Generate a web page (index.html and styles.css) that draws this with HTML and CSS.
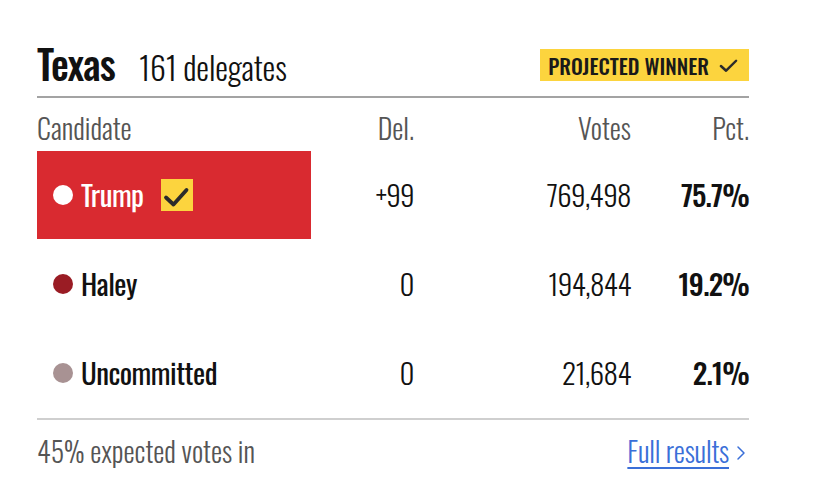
FILE: index.html
```html
<!DOCTYPE html>
<html lang="en">
<head>
<meta charset="utf-8">
<title>Texas results</title>
<link rel="stylesheet" href="styles.css">
</head>
<body>
<section class="card">
  <header class="card-head">
    <h2 class="state"><span class="state-name">Texas</span><span class="state-dels">161 delegates</span></h2>
    <div class="badge">PROJECTED WINNER
      <svg class="badge-check" viewBox="0 0 20 20" width="19" height="19"><path d="M2 10.5 L7.5 15.5 L18 5" fill="none" stroke="#2b2b2b" stroke-width="2.6" stroke-linecap="round" stroke-linejoin="round"/></svg>
    </div>
  </header>
  <div class="table">
    <div class="row head">
      <div class="cell cand">Candidate</div>
      <div class="cell num">Del.</div>
      <div class="cell num">Votes</div>
      <div class="cell num">Pct.</div>
    </div>
    <div class="row">
      <div class="cell cand winner"><span class="dot dot-white"></span><span class="name">Trump</span>
        <span class="win-box"><svg viewBox="0 0 32 32" width="32" height="32"><path d="M5 18.5 L12.5 25.5 L25.5 11" fill="none" stroke="#2b2b2b" stroke-width="3.8" stroke-linecap="round" stroke-linejoin="round"/></svg></span>
      </div>
      <div class="cell num val">+99</div>
      <div class="cell num val">769,498</div>
      <div class="cell num pct">75.7%</div>
    </div>
    <div class="row">
      <div class="cell cand"><span class="dot dot-haley"></span><span class="name">Haley</span></div>
      <div class="cell num val">0</div>
      <div class="cell num val">194,844</div>
      <div class="cell num pct">19.2%</div>
    </div>
    <div class="row">
      <div class="cell cand"><span class="dot dot-unc"></span><span class="name">Uncommitted</span></div>
      <div class="cell num val">0</div>
      <div class="cell num val">21,684</div>
      <div class="cell num pct">2.1%</div>
    </div>
  </div>
  <footer class="card-foot">
    <span class="expected">45% expected votes in</span>
    <a class="full" href="#">Full results</a>
    <svg class="chev" viewBox="0 0 10 16" width="10" height="16"><path d="M2 2 L8 8 L2 14" fill="none" stroke="#3a6fd8" stroke-width="1.5" stroke-linecap="round" stroke-linejoin="round"/></svg>
  </footer>
</section>
</body>
</html>
```
FILE: styles.css
```css
html, body { margin: 0; padding: 0; background: #fff; }
body { font-family: Oswald, "Roboto Condensed", "Liberation Sans", sans-serif; color: #111; }

.card { width: 712px; margin-left: 37px; padding-top: 38px; }

.card-head {
  display: flex;
  justify-content: space-between;
  align-items: flex-end;
  height: 58px;
  border-bottom: 2px solid #a3a3a3;
}
.state {
  margin: 0 0 7px 0; display: flex; align-items: baseline; gap: 24px;
  font-weight: normal; line-height: 1.3;
}
.state-name { font-size: 40px; font-weight: 500; letter-spacing: -0.9px; color: #111; }
.state-dels { font-size: 32px; font-weight: 300; color: #111; letter-spacing: -0.1px; }

.badge {
  display: flex; align-items: center; gap: 10px;
  background: #fcd43e;
  height: 32px; padding: 0 11px 0 8px;
  font-size: 21px; font-weight: 500; color: #1a1a1a; letter-spacing: 0;
  margin-bottom: 15px;
}
.badge-check { display: block; }

.row {
  display: grid;
  grid-template-columns: 274px 103px 217px 118px;
  height: 89px;
  align-items: start;
}
.row.head { height: 53px; font-size: 28px; font-weight: 300; color: #555; }
.row.head .cell { padding-top: 13px; line-height: 1.2; }

.cell.num { text-align: right; align-self: center; }
.row.head .cell.num { align-self: start; }
.cand { display: flex; align-items: center; height: 88px; }
.row.head .cand { height: auto; }
.winner { background: #d92a30; color: #fff; }

.dot { width: 20px; height: 20px; border-radius: 50%; margin-left: 16px; margin-right: 8px; flex: none; }
.dot-white { background: #fff; }
.dot-haley { background: #9a1c24; }
.dot-unc { background: #a89293; }

.name { font-size: 29px; font-weight: 400; letter-spacing: -0.5px; margin-top: -3px; }
.win-box { width: 32px; height: 32px; background: #fcd43e; margin-left: 17px; display: block; }
.win-box svg { display: block; }

.val { font-size: 29px; font-weight: 300; color: #111; letter-spacing: -0.6px; margin-top: -4px; }
.pct { font-size: 29px; font-weight: 500; color: #111; letter-spacing: -0.8px; margin-top: -4px; }

.card-foot {
  border-top: 2px solid #cfcfcf;
  display: flex; align-items: baseline;
  padding-top: 10px;
  font-size: 28px; font-weight: 300;
}
.expected { color: #555; flex: 1; }
.full { color: #3a6fd8; text-decoration: underline; text-underline-offset: 4px; text-decoration-thickness: 2px; letter-spacing: -0.2px; }
.chev { margin-left: 7px; margin-right: 3px; align-self: center; margin-top: 4px; }
```
